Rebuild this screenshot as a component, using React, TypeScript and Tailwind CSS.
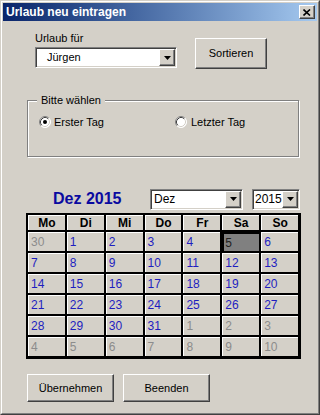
import React from 'react'

// classic 3D frames
const raised =
  'bg-[#d4d0c8] border border-t-white border-l-white border-r-[#404040] border-b-[#404040] shadow-[inset_-1px_-1px_0_#808080]'
const sunken =
  'border border-t-[#808080] border-l-[#808080] border-r-white border-b-white shadow-[inset_1px_1px_0_#404040,inset_-1px_-1px_0_#d4d0c8]'

const weeks: number[][] = [
  [30, 1, 2, 3, 4, 5, 6],
  [7, 8, 9, 10, 11, 12, 13],
  [14, 15, 16, 17, 18, 19, 20],
  [21, 22, 23, 24, 25, 26, 27],
  [28, 29, 30, 31, 1, 2, 3],
  [4, 5, 6, 7, 8, 9, 10],
]

const isOther = (r: number, c: number) => (r === 0 && c === 0) || (r === 4 && c >= 4) || r === 5

const Arrow = () => (
  <div className={`${raised} w-[16px] h-[17px] flex items-center justify-center shrink-0`}>
    <svg width="7" height="4" viewBox="0 0 7 4">
      <polygon points="0,0 7,0 3.5,4" fill="#000" />
    </svg>
  </div>
)

const Combo: React.FC<{ value: string; className: string; textClass: string }> = ({ value, className, textClass }) => (
  <div className={`${sunken} ${className} bg-white h-[21px] p-px flex items-center`}>
    <span className={`flex-1 ${textClass} text-black`}>{value}</span>
    <Arrow />
  </div>
)

const Radio: React.FC<{ checked?: boolean }> = ({ checked }) => (
  <svg width="12" height="12" viewBox="0 0 12 12" className="shrink-0">
    <circle cx="6" cy="6" r="5.5" fill="#fff" />
    <path d="M2.11 9.89 A5.5 5.5 0 0 1 9.89 2.11" stroke="#808080" fill="none" />
    <path d="M9.89 2.11 A5.5 5.5 0 0 1 2.11 9.89" stroke="#fff" fill="none" />
    <path d="M2.82 9.18 A4.5 4.5 0 0 1 9.18 2.82" stroke="#404040" fill="none" />
    <path d="M9.18 2.82 A4.5 4.5 0 0 1 2.82 9.18" stroke="#d4d0c8" fill="none" />
    {checked && <circle cx="6" cy="6" r="2" fill="#000" />}
  </svg>
)

const Button: React.FC<{ label: string; className: string }> = ({ label, className }) => (
  <button className={`${raised} ${className} text-[11px] text-black flex items-center justify-center`}>{label}</button>
)

export default function App() {
  return (
    <div className="w-[320px] h-[415px] border border-t-[#d4d0c8] border-l-[#d4d0c8] border-r-[#404040] border-b-[#404040] font-['Liberation_Sans',Arial,sans-serif]">
      <div className="h-full border border-t-white border-l-white border-r-[#808080] border-b-[#808080] bg-[#d4d0c8] p-px flex flex-col">
        {/* title bar */}
        <div className="h-[18px] shrink-0 flex items-center bg-gradient-to-r from-[#0a246a] to-[#a6caf0] pl-[3px] pr-[2px]">
          <span className="flex-1 text-white font-bold text-[12px] leading-[14px]">Urlaub neu eintragen</span>
          <div className={`${raised} w-[16px] h-[14px] flex items-center justify-center`}>
            <svg width="8" height="7" viewBox="0 0 8 7">
              <path d="M0.5 0.5 L7 6.5 M7 0.5 L0.5 6.5" stroke="#000" strokeWidth="1.6" />
            </svg>
          </div>
        </div>

        {/* person */}
        <div className="flex mt-[10px] pl-[32px]">
          <div className="flex flex-col">
            <span className="text-[11px] leading-[14px] text-black">Urlaub für</span>
            <Combo value="Jürgen" className="mt-[2px] w-[142px]" textClass="text-[11px] pl-[10px]" />
          </div>
          <Button label="Sortieren" className="ml-[18px] mt-[7px] w-[72px] h-[31px]" />
        </div>

        {/* group box */}
        <div className="relative ml-[24px] mt-[31px] w-[272px] h-[57px] border border-[#808080] shadow-[inset_1px_1px_0_#fff,1px_1px_0_#fff]">
          <span className="absolute -top-[8px] left-[9px] px-[4px] bg-[#d4d0c8] text-[11px] leading-[14px] text-black">Bitte wählen</span>
          <div className="flex items-center pt-[14px] pl-[11px] text-[11px] leading-[14px] text-black">
            <label className="flex items-center gap-[3px] w-[136px]">
              <Radio checked />
              Erster Tag
            </label>
            <label className="flex items-center gap-[4px]">
              <Radio />
              Letzter Tag
            </label>
          </div>
        </div>

        {/* month header */}
        <div className="flex items-center mt-[32px] pl-[50px] h-[20px]">
          <span className="w-[97px] font-bold text-[16px] text-[#0a0aa0] leading-[20px]">Dez 2015</span>
          <Combo value="Dez" className="w-[93px] h-[20px]" textClass="text-[12px] pl-[2px]" />
          <Combo value="2015" className="ml-[9px] w-[48px] h-[20px]" textClass="text-[12px] pl-[1px]" />
        </div>

        {/* calendar grid */}
        <div className="ml-[23px] mt-[4px] w-[275px] bg-black border-black border-t-2 border-l-2 border-r-[3px] border-b-[3px] grid grid-cols-7 gap-[2px] text-[12px]">
          {['Mo', 'Di', 'Mi', 'Do', 'Fr', 'Sa', 'So'].map((d) => (
            <div key={d} className="h-[15px] bg-[#d4d0c8] border-t border-l border-white flex items-center justify-center font-bold text-black leading-none">
              {d}
            </div>
          ))}
          {weeks.map((w, r) =>
            w.map((n, c) => {
              const sel = r === 0 && c === 5
              return (
                <div
                  key={`${r}-${c}`}
                  className={
                    sel
                      ? 'h-[19px] bg-[#808080] border-t-2 border-l-2 border-black flex items-center pl-[1px] text-[#202020]'
                      : `h-[19px] bg-[#d4d0c8] border-t border-l border-white flex items-center pl-[2px] ${isOther(r, c) ? 'text-[#8c8c8c]' : 'text-[#1e1ec0]'}`
                  }
                >
                  {n}
                </div>
              )
            })
          )}
        </div>

        {/* actions */}
        <div className="flex ml-[24px] mt-[15px] gap-[9px]">
          <Button label="Übernehmen" className="w-[87px] h-[28px]" />
          <Button label="Beenden" className="w-[87px] h-[28px]" />
        </div>
      </div>
    </div>
  )
}
